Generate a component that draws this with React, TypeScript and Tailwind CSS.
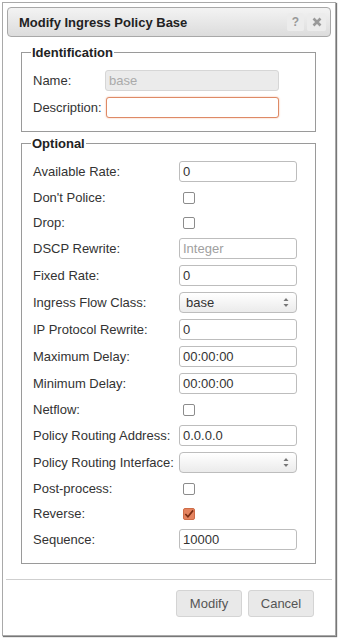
import React from "react";

const font = "font-['Liberation_Sans',Arial,Helvetica,sans-serif]";

function TextInput({ value, placeholder }: { value?: string; placeholder?: string }) {
  return (
    <div className="h-[21px] w-[118px] rounded-[3px] border border-[#bdbdbd] bg-white text-[#333] px-[3px] flex items-center text-[13px] leading-[15px]">
      {value ? <span>{value}</span> : placeholder ? <span className="text-[#a0a0a0]">{placeholder}</span> : null}
    </div>
  );
}

function Select({ value }: { value?: string }) {
  return (
    <div className="h-[21px] w-[118px] rounded-[4px] border border-[#bdbdbd] bg-gradient-to-b from-white to-[#ebebeb] flex items-center justify-between pl-[6px] pr-[7px] text-[13px] text-[#333] leading-[15px]">
      <span>{value ?? ""}</span>
      <svg width="6" height="11" viewBox="0 0 6 11">
        <path d="M3 1 L5.5 4 L0.5 4 Z" fill="#777" />
        <path d="M3 10 L5.5 7 L0.5 7 Z" fill="#777" />
      </svg>
    </div>
  );
}

function Checkbox({ checked }: { checked?: boolean }) {
  if (checked) {
    return (
      <div className="ml-[4px] w-[12px] h-[12px] rounded-[2px] border border-[#cf6c47] bg-[#e4835f] flex items-center justify-center">
        <svg width="11" height="10" viewBox="0 0 11 10">
          <path d="M1.5 5 L4.3 8 L10 1" stroke="#7a2e14" strokeWidth="1.8" fill="none" />
        </svg>
      </div>
    );
  }
  return <div className="ml-[4px] w-[12px] h-[12px] rounded-[2px] border border-[#8c8c8c] bg-white" />;
}

type Row =
  | { label: string; kind: "input"; value?: string; placeholder?: string }
  | { label: string; kind: "select"; value?: string }
  | { label: string; kind: "check"; checked?: boolean };

const rows: Row[] = [
  { label: "Available Rate:", kind: "input", value: "0" },
  { label: "Don't Police:", kind: "check" },
  { label: "Drop:", kind: "check" },
  { label: "DSCP Rewrite:", kind: "input", placeholder: "Integer" },
  { label: "Fixed Rate:", kind: "input", value: "0" },
  { label: "Ingress Flow Class:", kind: "select", value: "base" },
  { label: "IP Protocol Rewrite:", kind: "input", value: "0" },
  { label: "Maximum Delay:", kind: "input", value: "00:00:00" },
  { label: "Minimum Delay:", kind: "input", value: "00:00:00" },
  { label: "Netflow:", kind: "check" },
  { label: "Policy Routing Address:", kind: "input", value: "0.0.0.0" },
  { label: "Policy Routing Interface:", kind: "select" },
  { label: "Post-process:", kind: "check" },
  { label: "Reverse:", kind: "check", checked: true },
  { label: "Sequence:", kind: "input", value: "10000" },
];

export default function App() {
  return (
    <div className={`w-[340px] h-[640px] bg-white pt-[2px] pl-[2px] ${font}`}>
      <div className="w-[334px] h-[634px] border border-[#a9a9a9] shadow-[1px_1px_1px_#777] bg-white p-[4px] flex flex-col">
        {/* Title bar */}
        <div className="h-[30px] rounded-[4px] border border-[#a8a8a8] bg-gradient-to-b from-[#f3f3f3] to-[#dcdcdc] flex items-center justify-between pl-[11px] pr-[4px]">
          <span className="text-[13px] font-bold text-[#222] leading-[15px]">Modify Ingress Policy Base</span>
          <div className="flex gap-[3px]">
            <div className="w-[17px] h-[18px] rounded-[2px] bg-[#ececec] flex items-center justify-center text-[12px] font-bold text-[#999]">?</div>
            <div className="w-[19px] h-[18px] rounded-[2px] bg-[#ececec] flex items-center justify-center">
              <svg width="10" height="10" viewBox="0 0 10 10">
                <path d="M1.5 1.5 L8.5 8.5 M8.5 1.5 L1.5 8.5" stroke="#9a9a9a" strokeWidth="2.6" />
              </svg>
            </div>
          </div>
        </div>

        {/* Content */}
        <div className="pl-[14px] pr-[15px] pt-[8px]">
          <fieldset className="border border-[#9a9a9a] pl-[11px] pr-[10px] pt-[10px] pb-[13px]">
            <legend className="-ml-[2px] px-[1px] text-[13px] font-bold text-[#222] leading-[15px]">Identification</legend>
            <div className="flex flex-col gap-[6px] text-[13px] text-[#333]">
              <div className="flex items-center h-[21px]">
                <span className="w-[72px]">Name:</span>
                <div className="h-[21px] w-[174px] rounded-[3px] border border-[#d6d6d6] bg-[#ebebeb] text-[#aaa] px-[3px] flex items-center text-[13px]">base</div>
              </div>
              <div className="flex items-center h-[21px]">
                <span className="w-[73px]">Description:</span>
                <div className="h-[21px] w-[173px] rounded-[3px] border border-[#de8a66] bg-white shadow-[0_0_2px_#f1b79c]" />
              </div>
            </div>
          </fieldset>

          <fieldset className="mt-[4px] border border-[#9a9a9a] pl-[11px] pr-[10px] pt-[10px] pb-[13px]">
            <legend className="-ml-[2px] px-[1px] text-[13px] font-bold text-[#222] leading-[15px]">Optional</legend>
            <div className="flex flex-col gap-[6px] text-[13px] text-[#333] leading-[15px]">
              {rows.map((r) => (
                <div key={r.label} className={`flex items-center ${r.kind === "check" ? "h-[19px]" : "h-[21px]"}`}>
                  <span className="w-[146px] whitespace-nowrap">{r.label}</span>
                  {r.kind === "input" && <TextInput value={r.value} placeholder={r.placeholder} />}
                  {r.kind === "select" && <Select value={r.value} />}
                  {r.kind === "check" && <Checkbox checked={r.checked} />}
                </div>
              ))}
            </div>
          </fieldset>
        </div>

        {/* Footer */}
        <div className="mt-[15px] border-t border-[#cfcfcf] -mx-[1px] pt-[10px] flex justify-end gap-[6px] pr-[18px]">
          <button className="w-[66px] h-[27px] rounded-[3px] border border-[#d4d4d4] bg-[#e9e9e9] text-[13px] text-[#555]">Modify</button>
          <button className="w-[66px] h-[27px] rounded-[3px] border border-[#d4d4d4] bg-[#e9e9e9] text-[13px] text-[#555]">Cancel</button>
        </div>
      </div>
    </div>
  );
}
